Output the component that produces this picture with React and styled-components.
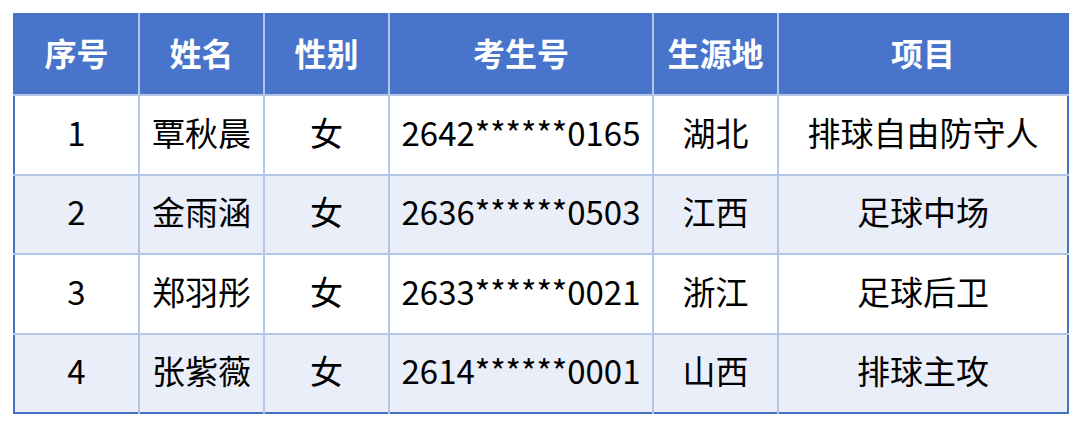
import React from "react";
import styled, { createGlobalStyle } from "styled-components";

const Global = createGlobalStyle`
  html, body { margin: 0; padding: 0; background: #ffffff; }
  body { font-family: "Noto Sans CJK SC", "Noto Sans", sans-serif; }
`;

const Page = styled.div`
  padding: 13px 13px 0 13px;
`;

const Table = styled.table`
  width: 1054px;
  border-collapse: collapse;
  table-layout: fixed;
  border: 2px solid #4472c4;
`;

const HeadCell = styled.th`
  height: 75px;
  padding: 0 0 4px 0;
  background: #4874cb;
  color: #ffffff;
  font-size: 32px;
  line-height: 1.2;
  font-weight: 700;
  text-align: center;
  border: 2px solid #b4c6e7;
  border-top: none;
  &:first-child { border-left: none; }
  &:last-child { border-right: none; }
`;

const Row = styled.tr`
  background: ${(p) => (p.$alt ? "#e9eef9" : "#ffffff")};
`;

const Cell = styled.td`
  height: 73.5px;
  padding: 0 0 4px 0;
  color: #000000;
  font-size: 33px;
  line-height: 1.2;
  text-align: center;
  border: 2px solid #b4c6e7;
  &:first-child { border-left: none; }
  &:last-child { border-right: none; }
  tr:last-child > & { border-bottom: none; }
`;

const cols = [125, 125, 125, 264, 125, 290];
const heads = ["序号", "姓名", "性别", "考生号", "生源地", "项目"];
const rows = [
  ["1", "覃秋晨", "女", "2642******0165", "湖北", "排球自由防守人"],
  ["2", "金雨涵", "女", "2636******0503", "江西", "足球中场"],
  ["3", "郑羽彤", "女", "2633******0021", "浙江", "足球后卫"],
  ["4", "张紫薇", "女", "2614******0001", "山西", "排球主攻"],
];

export default function App() {
  return (
    <>
      <Global />
      <Page>
        <Table>
          <colgroup>
            {cols.map((w, i) => (
              <col key={i} style={{ width: w }} />
            ))}
          </colgroup>
          <thead>
            <tr>
              {heads.map((h) => (
                <HeadCell key={h}>{h}</HeadCell>
              ))}
            </tr>
          </thead>
          <tbody>
            {rows.map((r, i) => (
              <Row key={i} $alt={i % 2 === 1}>
                {r.map((c, j) => (
                  <Cell key={j}>{c}</Cell>
                ))}
              </Row>
            ))}
          </tbody>
        </Table>
      </Page>
    </>
  );
}
